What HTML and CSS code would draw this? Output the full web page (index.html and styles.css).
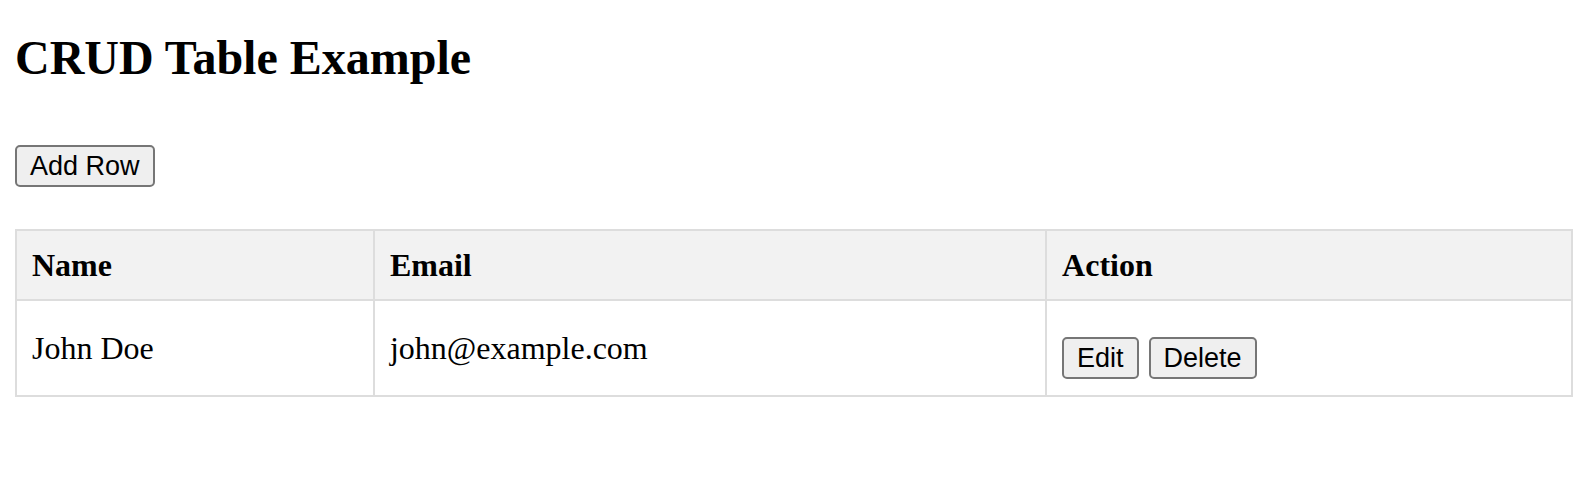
FILE: index.html
```html
<!DOCTYPE html>
<html lang="en">
<head>
	<meta charset="UTF-8">
	<title>CRUD Table Example</title>
	<link rel="stylesheet" href="styles.css">
</head>
<body>
	<h2 class="title">CRUD Table Example</h2>
	<div class="toolbar">
		<button class="btn">Add Row</button>
	</div>
	<table class="crud">
		<thead>
			<tr>
				<th class="col-name">Name</th>
				<th class="col-email">Email</th>
				<th class="col-action">Action</th>
			</tr>
		</thead>
		<tbody>
			<tr>
				<td>John Doe</td>
				<td>john@example.com</td>
				<td>
					<div class="actions">
						<button class="btn">Edit</button>
						<button class="btn">Delete</button>
					</div>
				</td>
			</tr>
		</tbody>
	</table>
</body>
</html>
```

FILE: styles.css
```css
*{
	margin:0;
	padding:0;
	box-sizing: border-box;
}

body {
	padding: 0 15px;
	font-family: "Liberation Serif", "Times New Roman", serif;
	font-size: 32px;
	color: #000;
	background: #fff;
}

.title {
	margin: 30px 0 60px;
	font-size: 48px;
	line-height: 55px;
	font-weight: bold;
}

.toolbar {
	display: flex;
}

.btn {
	height: 42px;
	padding: 0 13px;
	font-family: "Liberation Sans", Arial, sans-serif;
	font-size: 27px;
	line-height: 38px;
	color: #000;
	background: #efefef;
	border: 2px solid #767676;
	border-radius: 5px;
}

.crud {
	width: 100%;
	margin-top: 42px;
	border-collapse: collapse;
}

.crud th,
.crud td {
	padding: 15px;
	border: 2px solid #ddd;
	text-align: left;
	line-height: 38px;
	vertical-align: middle;
}

.crud th {
	background: #f2f2f2;
	font-weight: bold;
}

.col-name { width: 23%; }
.col-email { width: 43.2%; }
.col-action { width: 33.8%; }

.actions {
	display: flex;
	gap: 10px;
	padding: 21px 0 1px;
}
```
